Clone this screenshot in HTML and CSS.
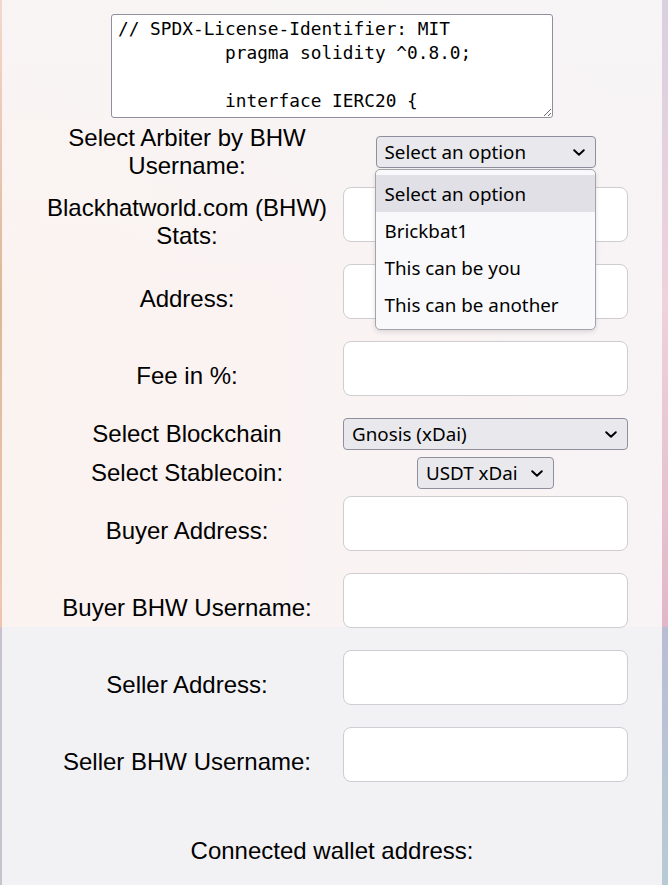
FILE: index.html
```html
<!DOCTYPE html>
<html lang="en">
<head>
<meta charset="utf-8">
<title>Escrow</title>
<link rel="stylesheet" href="styles.css">
</head>
<body>
<div class="page">
  <div class="content">
    <textarea class="code" spellcheck="false">// SPDX-License-Identifier: MIT
          pragma solidity ^0.8.0;

          interface IERC20 {
              function transfer(address recipient, uint256 amount) external returns (bool);
              function transferFrom(address sender, address recipient, uint256 amount) external returns (bool);
          }</textarea>

    <div class="form">
      <label class="lbl">Select Arbiter by BHW Username:</label>
      <div class="field field-center">
        <div class="sel-wrap">
          <select class="sel">
            <option>Select an option</option>
            <option>Brickbat1</option>
            <option>This can be you</option>
            <option>This can be another</option>
          </select>
          <svg class="chev" viewBox="0 0 12 7" aria-hidden="true"><path d="M1.2 1.2 L6 5.8 L10.8 1.2" fill="none" stroke="#000" stroke-width="1.9" stroke-linecap="round" stroke-linejoin="round"/></svg>
          <div class="popup">
            <div class="opt opt-hl">Select an option</div>
            <div class="opt">Brickbat1</div>
            <div class="opt">This can be you</div>
            <div class="opt">This can be another</div>
          </div>
        </div>
      </div>

      <label class="lbl">Blackhatworld.com (BHW) Stats:</label>
      <div class="field"><input class="inp" type="text"></div>

      <label class="lbl">Address:</label>
      <div class="field"><input class="inp" type="text"></div>

      <label class="lbl">Fee in %:</label>
      <div class="field"><input class="inp" type="text"></div>

      <label class="lbl">Select Blockchain</label>
      <div class="field">
        <div class="sel-wrap sel-wrap-full">
          <select class="sel sel-full">
            <option>Gnosis (xDai)</option>
          </select>
          <svg class="chev" viewBox="0 0 12 7" aria-hidden="true"><path d="M1.2 1.2 L6 5.8 L10.8 1.2" fill="none" stroke="#000" stroke-width="1.9" stroke-linecap="round" stroke-linejoin="round"/></svg>
        </div>
      </div>

      <label class="lbl">Select Stablecoin:</label>
      <div class="field field-center">
        <div class="sel-wrap">
          <select class="sel">
            <option>USDT xDai</option>
          </select>
          <svg class="chev" viewBox="0 0 12 7" aria-hidden="true"><path d="M1.2 1.2 L6 5.8 L10.8 1.2" fill="none" stroke="#000" stroke-width="1.9" stroke-linecap="round" stroke-linejoin="round"/></svg>
        </div>
      </div>

      <label class="lbl">Buyer Address:</label>
      <div class="field"><input class="inp" type="text"></div>

      <label class="lbl">Buyer BHW Username:</label>
      <div class="field"><input class="inp" type="text"></div>

      <label class="lbl">Seller Address:</label>
      <div class="field"><input class="inp" type="text"></div>

      <label class="lbl">Seller BHW Username:</label>
      <div class="field"><input class="inp" type="text"></div>
    </div>

    <div class="wallet">Connected wallet address:</div>
  </div>
</div>
</body>
</html>
```

FILE: styles.css
```css
html, body {
  margin: 0;
  padding: 0;
}

body {
  min-height: 885px;
  font-family: "Liberation Sans", Arial, sans-serif;
  color: #000;
  background:
    linear-gradient(to bottom, #f7d6cd 0, #dcb896 300px, #f0c6b0 600px, #efc2ae 627px, #c9c1d2 628px, #c6c3cc 885px) left top / 2px 100% no-repeat,
    linear-gradient(to bottom, #d9d0e0 0, #eed2dc 300px, #e1b7c7 626px, #b9bdd4 628px, #b8cbd4 885px) right top / 6px 100% no-repeat,
    #f2f2f5;
}

.page {
  margin: 0 6px 0 2px;
  min-height: 885px;
  background:
    linear-gradient(to bottom, rgba(242, 242, 245, 0) 627px, #f2f2f5 627px),
    linear-gradient(to bottom, rgba(246, 246, 247, 0.55) 0, rgba(246, 246, 247, 0) 300px),
    linear-gradient(to right, #fbf3f0, #f8f3f5);
}

.content {
  display: flex;
  flex-direction: column;
  align-items: center;
  gap: 7px;
  padding-top: 14px;
}

.code {
  display: block;
  margin: 0;
  width: 442px;
  height: 104px;
  box-sizing: border-box;
  padding: 2px 6px;
  font-family: "DejaVu Sans Mono", monospace;
  font-size: 17.8px;
  line-height: 24px;
  color: #000;
  background: #fff;
  border: 1px solid #8f8f9d;
  border-radius: 3px;
  white-space: pre;
  overflow: hidden;
  resize: both;
}

.form {
  display: grid;
  grid-template-columns: 302px 285px;
  column-gap: 5px;
  row-gap: 7px;
  align-items: center;
  margin-top: -1px;
}

.lbl {
  font-size: 24px;
  line-height: normal;
  text-align: center;
}

.field-center {
  justify-self: center;
}

.inp {
  display: block;
  width: 285px;
  height: 55px;
  box-sizing: border-box;
  margin: 0 0 15px;
  border: 1px solid #cfcdd2;
  border-radius: 8px;
  background: #fff;
}

.sel-wrap {
  position: relative;
}

.sel-wrap-full {
  width: 285px;
}

.sel {
  -webkit-appearance: none;
  appearance: none;
  display: block;
  margin: 0;
  height: 32px;
  box-sizing: border-box;
  padding: 0 35px 0 8px;
  border: 1px solid #8f8f9d;
  border-radius: 4px;
  background: #e9e9ed;
  color: #000;
  font-family: "Noto Sans", sans-serif;
  font-size: 18.8px;
}

.sel-full {
  width: 100%;
}

.chev {
  position: absolute;
  right: 11px;
  top: 50%;
  width: 12px;
  height: 7px;
  margin-top: -3px;
  pointer-events: none;
}

.popup {
  position: absolute;
  left: -1px;
  top: 33px;
  width: 221px;
  box-sizing: border-box;
  padding: 5px 0 6px;
  border: 1px solid #a3a3aa;
  border-radius: 5px;
  background: #f9f9fb;
  box-shadow: 0 2px 5px rgba(0, 0, 0, 0.12);
  z-index: 10;
  font-family: "Noto Sans", sans-serif;
  font-size: 18.8px;
}

.opt {
  height: 37px;
  line-height: 38px;
  padding-left: 9px;
  white-space: nowrap;
}

.opt-hl {
  background: #e0e0e6;
}

.wallet {
  margin-top: 33px;
  font-size: 24px;
  line-height: normal;
  text-align: center;
}
```
